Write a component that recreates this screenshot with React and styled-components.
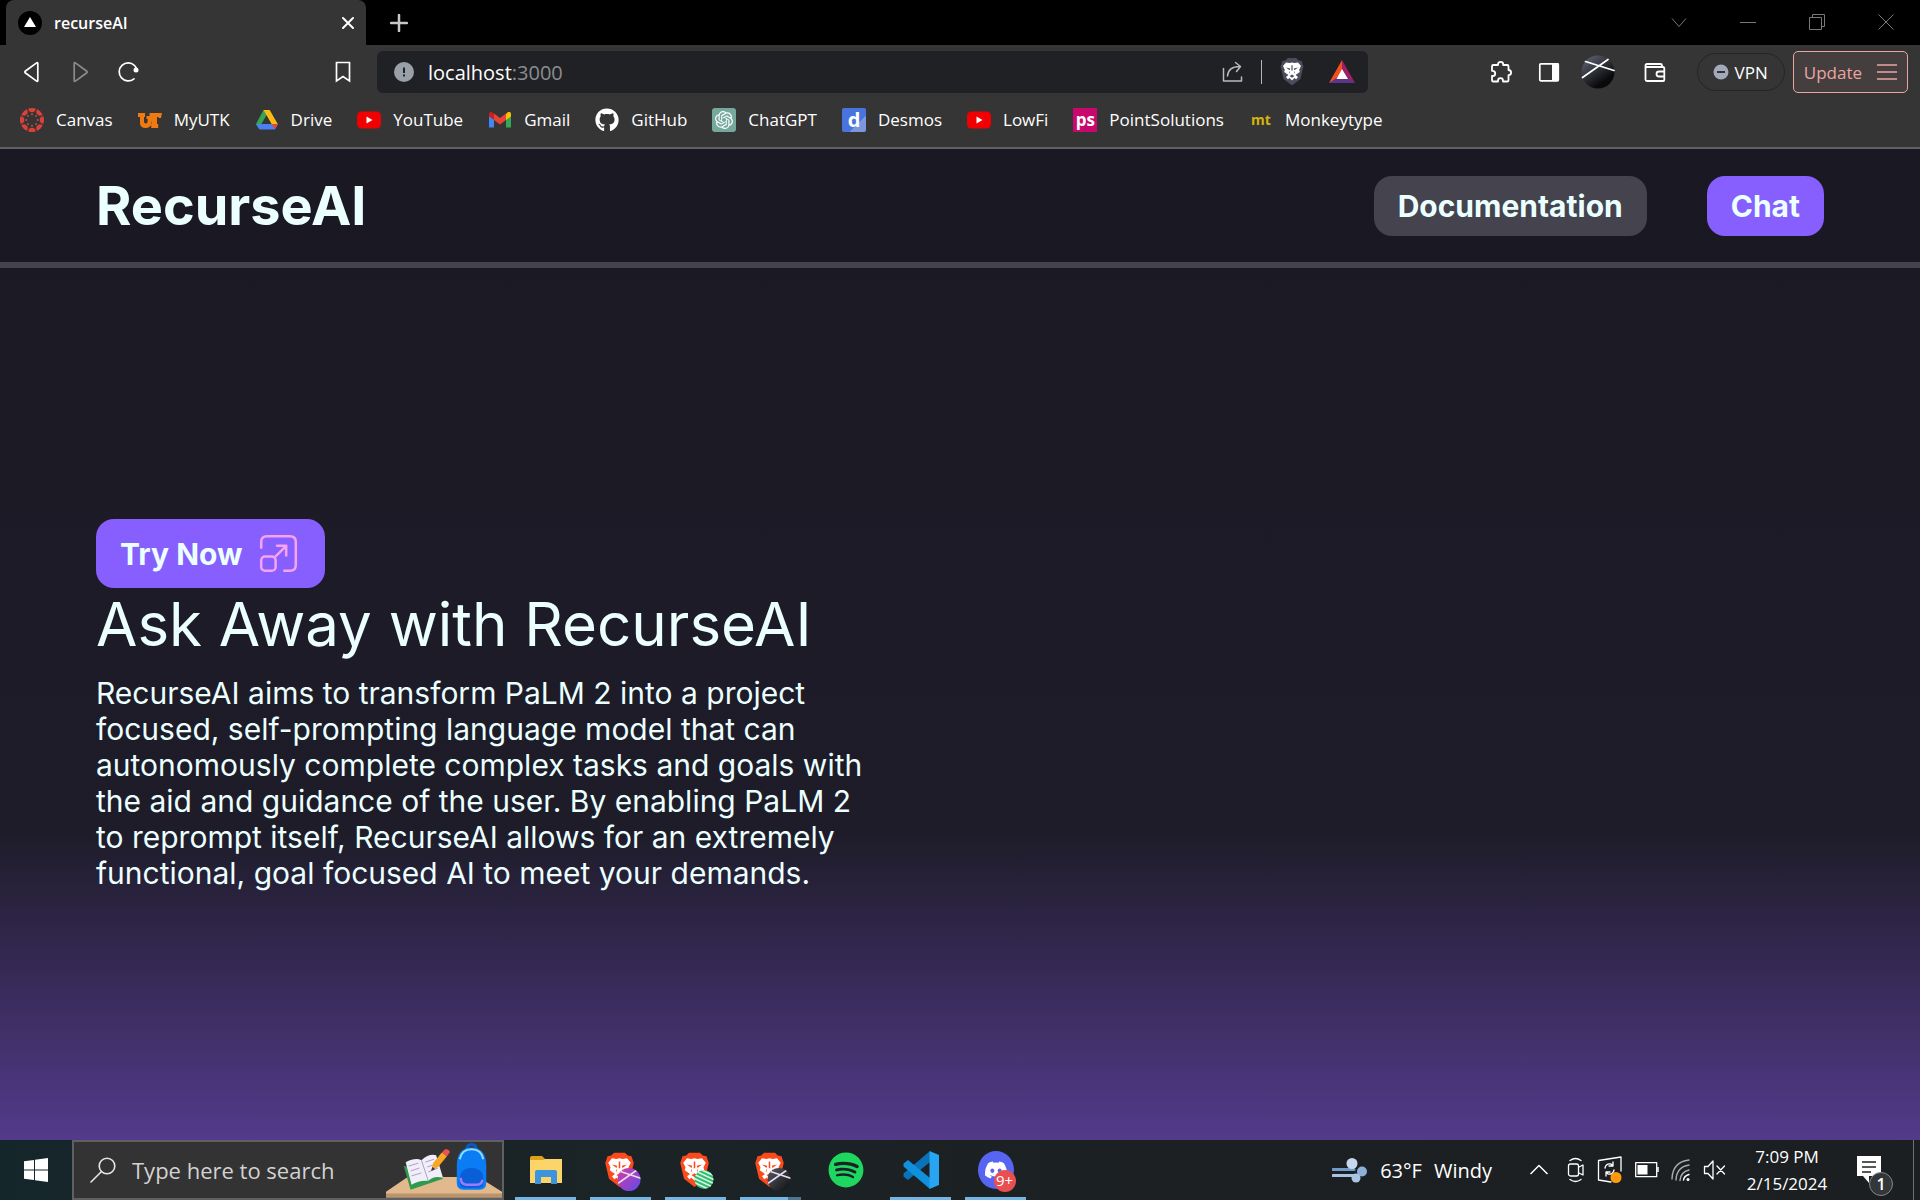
import React from "react";
import styled, { createGlobalStyle } from "styled-components";
import { SiOpenai } from "react-icons/si";
import { FaGithub, FaSpotify, FaDiscord } from "react-icons/fa";

const UI = '"Open Sans", "Noto Sans", sans-serif';
const MINT = "#ebffff";

const Global = createGlobalStyle`
  *, *::before, *::after { box-sizing: border-box; }
  body { margin: 0; background: #1b1a24; font-family: Inter, sans-serif; }
  button, input { font: inherit; color: inherit; border: 0; margin: 0; padding: 0; background: none; }
  a { color: inherit; text-decoration: none; }
  h1, h2, p, ul { margin: 0; padding: 0; }
  svg { display: block; flex: none; }
`;

const Screen = styled.div`
  min-height: 100vh;
  display: flex;
  flex-direction: column;
`;

/* ---------- browser chrome ---------- */

const Browser = styled.div`
  font-family: ${UI};
  color: #fff;
  background: #353535;
  border-bottom: 2px solid #5f6063;
`;

const TabStrip = styled.div`
  display: flex;
  align-items: stretch;
  height: 45px;
  padding-left: 6px;
  background: #000;
`;

const Tab = styled.div`
  width: 360px;
  display: flex;
  align-items: center;
  gap: 12px;
  padding: 0 11px 0 12px;
  border-radius: 8px 8px 0 0;
  background: #353535;
  font-size: 16px;
  font-weight: 600;
`;

const TabTitle = styled.span`
  flex: 1;
`;

const IconButton = styled.button`
  display: flex;
  align-items: center;
  justify-content: center;
  width: ${(p) => p.$w || 24}px;
  height: ${(p) => p.$h || 24}px;
`;

const WindowControls = styled.div`
  display: flex;
  margin-left: auto;
`;

const Toolbar = styled.div`
  display: grid;
  grid-template-columns: 365px 1fr 540px;
  gap: 12px;
  align-items: center;
  height: 54px;
`;

const NavGroup = styled.div`
  display: flex;
  align-items: center;
  gap: 24px;
  padding: 0 10px 0 20px;

  & > :last-child { margin-left: auto; }
`;

const AddressBar = styled.div`
  display: flex;
  align-items: center;
  height: 42px;
  padding: 0 6px 0 17px;
  border-radius: 6px;
  background: #202124;
  font-size: 20px;
`;

const AddressInput = styled.input`
  field-sizing: content;
  margin-left: 14px;
  outline: none;
`;

const Port = styled.span`
  flex: 1;
  color: #8b8d91;
`;

const AddressActions = styled.div`
  display: flex;
  align-items: center;
  gap: 16px;
`;

const Divider = styled.span`
  width: 1px;
  height: 24px;
  background: #b5b6b8;
`;

const Extensions = styled.div`
  display: flex;
  align-items: center;
  justify-content: flex-end;
  gap: 8px;
  padding-right: 12px;
`;

const ExtensionIcons = styled.div`
  display: flex;
  align-items: center;
  gap: 16px;
  margin-right: 10px;
`;

const Vpn = styled.button`
  display: flex;
  align-items: center;
  gap: 6px;
  height: 38px;
  padding: 0 16px 0 15px;
  border: 1px solid #252525;
  border-radius: 19px;
  font-size: 17px;
`;

const Update = styled.button`
  display: flex;
  align-items: center;
  gap: 15px;
  height: 42px;
  padding: 0 10px;
  border: 1px solid #eaa5a3;
  border-radius: 5px;
  background: #453e3e;
  color: #eaa5a3;
  font-size: 17px;
`;

const Bookmarks = styled.ul`
  display: flex;
  align-items: center;
  gap: 25px;
  height: 48px;
  padding: 0 20px 6px;
  list-style: none;
`;

const Bookmark = styled.a`
  display: flex;
  align-items: center;
  gap: 12px;
  font-size: 17px;
  line-height: 24px;
`;

const Favicon = styled.span`
  display: flex;
  align-items: center;
  justify-content: center;
  width: 24px;
  height: 24px;
  border-radius: ${(p) => p.$radius || 0}px;
  background: ${(p) => p.$bg || "none"};
  color: ${(p) => p.$color || "#fff"};
  font-size: ${(p) => p.$size || 17}px;
  font-weight: 700;
  line-height: 20px;
`;

/* ---------- site ---------- */

const Site = styled.div`
  flex: 1;
  display: flex;
  flex-direction: column;
  color: ${MINT};
  background: linear-gradient(180deg, #1a1923 0%, #1e1c29 69%, #533a8b 100%);
`;

const SiteHeader = styled.header`
  display: flex;
  align-items: center;
  justify-content: space-between;
  height: 119px;
  padding: 0 96px;
  background: #1a1923;
  border-bottom: 6px solid #44434e;
`;

const Brand = styled.h1`
  font-size: 54px;
  line-height: 60px;
  font-weight: 700;
`;

const SiteNav = styled.nav`
  display: flex;
  gap: 60px;
`;

const PillLink = styled.a`
  display: inline-flex;
  align-items: center;
  gap: 13px;
  padding: 12px 24px;
  border-radius: 18px;
  background: ${(p) => (p.$muted ? "#44434e" : "#875fff")};
  font-size: 30px;
  line-height: 36px;
  font-weight: 700;
`;

const Hero = styled.main`
  flex: 1;
  display: flex;
  flex-direction: column;
  justify-content: center;
  align-items: flex-start;
  padding: 2px 96px 0;
`;

const HeroTitle = styled.h2`
  margin: 6px 0 21px;
  font-size: 60px;
  line-height: 60px;
  font-weight: 400;
`;

const HeroText = styled.p`
  max-width: 45%;
  font-size: 30px;
  line-height: 36px;
`;

/* ---------- taskbar ---------- */

const Taskbar = styled.footer`
  display: flex;
  height: 60px;
  color: #fff;
  background: linear-gradient(90deg, #15262a 0%, #1b2326 35%, #1c2022 60%, #1b1f21 100%);
  font-family: ${UI};
`;

const Search = styled.label`
  display: flex;
  align-items: center;
  width: 432px;
  padding-left: 16px;
  border: 2px solid #5e6063;
  background: #333;
`;

const SearchInput = styled.input`
  flex: 1;
  min-width: 0;
  margin-left: 16px;
  font-size: 22px;
  outline: none;

  &::placeholder { color: #d2d2d2; opacity: 1; }
`;

const Apps = styled.div`
  display: flex;
  gap: 14px;
  padding-left: 11px;
`;

const underline = {
  none: "none",
  single: "linear-gradient(#76b4e3, #76b4e3)",
  stacked: "linear-gradient(90deg, #76b4e3 48px, #4f7590 48px)",
};

const AppButton = styled.button`
  display: flex;
  align-items: center;
  justify-content: center;
  width: 61px;
  height: 60px;
  padding-bottom: 1px;
  background: ${(p) => underline[p.$windows || "none"]} bottom / 100% 3px no-repeat;
`;

const Tray = styled.div`
  display: flex;
  align-items: center;
  margin-left: auto;
`;

const Weather = styled.button`
  display: flex;
  align-items: center;
  gap: 12px;
  margin-right: 37px;
  font-size: 20px;
`;

const TrayIcons = styled.div`
  display: flex;
  align-items: center;
  gap: 12px;

  & > :first-child { margin-right: 6px; }
`;

const Clock = styled.div`
  display: flex;
  flex-direction: column;
  align-items: center;
  width: 84px;
  margin: 0 28px 0 18px;
  font-size: 17px;
  line-height: 27px;
`;

const ShowDesktop = styled.button`
  width: 7px;
  height: 60px;
  margin-left: 20px;
  border-left: 1px solid #6f7274;
`;

const DiscordBadge = styled.span`
  position: absolute;
  right: -2px;
  bottom: -3px;
  width: 22px;
  height: 22px;
  border-radius: 50%;
  background: #e8504f;
  color: #fff;
  font-size: 15px;
  line-height: 21px;
  text-align: center;
`;

const DiscordDisc = styled.span`
  position: relative;
  display: flex;
  align-items: center;
  justify-content: center;
  width: 36px;
  height: 38px;
  border-radius: 50%;
  background: #5865f2;
`;

const NoticeButton = styled.button`
  position: relative;
  width: 36px;
  height: 44px;
  margin-top: 16px;
`;

const NoticeCount = styled.span`
  position: absolute;
  left: 12px;
  top: 16px;
  width: 24px;
  font-size: 16px;
  font-weight: 600;
  line-height: 24px;
  text-align: center;
`;

/* ---------- drawings ---------- */

const line = (color, width = 2) => ({
  fill: "none",
  stroke: color,
  strokeWidth: width,
  strokeLinecap: "round",
  strokeLinejoin: "round",
});

const NextIcon = () => (
  <svg width="24" height="24" viewBox="0 0 24 24">
    <circle cx="12" cy="12" r="12" />
    <path d="M12 6l6 10H6z" fill="#fff" />
  </svg>
);

const CanvasIcon = () => {
  const turns = [0, 45, 90, 135, 180, 225, 270, 315];
  return (
    <svg width="24" height="24" viewBox="0 0 24 24" fill="#d8423a">
      {turns.map((t) => (
        <g key={t} transform={`rotate(${t} 12 12)`}>
          <path d="M8.300 .6a12 12 0 0 1 7.400 0a3.700 3.700 0 0 1-7.400 0z" />
          <circle cx="12" cy="6.200" r="1" />
        </g>
      ))}
    </svg>
  );
};

const TennesseeIcon = () => (
  <svg width="24" height="15" viewBox="0 0 24 15" fill="#ee7a10">
    <path d="M0 0h7v4H6v4.500q0 2 1.800 2t1.800-2V6H8.500V3h3V0H24l-1 5h-2.500V4H19v7h1.200v4h-7v-4h.8V7q0 8-6.200 8T2 9V4H0z" />
  </svg>
);

const DriveIcon = () => (
  <svg width="24" height="24" viewBox="0 0 24 24">
    <path d="M8.500 2h6l-7.500 13-3.500 5.500L1 16z" fill="#35a454" />
    <path d="M8.500 2h6.200l8 14h-6.200z" fill="#fbbc12" />
    <path d="M5 16h18l-3 5.500H4.500L1 16z" fill="#4a80f0" />
    <path d="M16.500 16h6.300l-3 5z" fill="#e94335" />
    <path d="M12 8.500l4.300 7.500H7.700z" fill="#353535" />
  </svg>
);

const YouTubeIcon = () => (
  <svg width="24" height="18" viewBox="0 0 24 18">
    <rect width="24" height="17" y=".5" rx="4.500" fill="#f00000" />
    <path d="M9.500 5.500v7l6-3.500z" fill="#fff" />
  </svg>
);

const GmailIcon = () => (
  <svg width="24" height="18" viewBox="0 0 24 18">
    <path d="M1 4v12.500h5V8z" fill="#4285f4" />
    <path d="M23 4v12.500h-5V8z" fill="#34a853" />
    <path d="M18 3v6l5-3.500V3c0-2-2-2.500-3.500-1.500z" fill="#fbbc04" />
    <path d="M6 3v6L1 5.500V3c0-2 2-2.500 3.500-1.500z" fill="#c5221f" />
    <path d="M6 2.500l6 4.500 6-4.500v6.500l-6 4.500-6-4.500z" fill="#ea4335" />
  </svg>
);

const BackIcon = ({ color, flip }) => (
  <svg width="24" height="24" viewBox="0 0 24 24">
    <path
      d="M17.800 3.500v17q0 1.200-1.200.6L5.500 13q-1.300-1 0-2L16.600 2.900q1.200-.6 1.200.6z"
      transform={flip ? "matrix(-1 0 0 1 24 0)" : undefined}
      {...line(color, 1.7)}
    />
  </svg>
);

const ReloadIcon = () => (
  <svg width="24" height="24" viewBox="0 0 24 24">
    <path d="M18 18.800A9 9 0 1 1 18.500 5.500q1.500 1.500 2 3.500" {...line("#fff", 1.7)} />
    <circle cx="20" cy="10" r="2.500" fill="#fff" />
  </svg>
);

const SaveIcon = () => (
  <svg width="24" height="24" viewBox="0 0 24 24">
    <path d="M5.500 2.500h13v18.500L12 16.500 5.500 21z" {...line("#fff", 1.7)} strokeLinejoin="miter" />
  </svg>
);

const InfoIcon = () => (
  <svg width="20" height="20" viewBox="0 0 20 20">
    <circle cx="10" cy="10" r="10" fill="#9aa0a8" />
    <path d="M9 5.500h2v5.500H9zM9 12.500h2v2H9z" fill="#202124" />
  </svg>
);

const ShareIcon = () => (
  <svg width="24" height="24" viewBox="0 0 24 24">
    <path d="M2.500 8.500v12.500h18v-4M6.500 16c.5-6 5-9.500 12-9.500M14.500 2.500l5 4-4 5" {...line("#b9babd", 1.5)} />
  </svg>
);

const BatIcon = () => (
  <svg width="28" height="28" viewBox="0 0 28 28">
    <path d="M14 2v10L8.500 21 1 25z" fill="#f4501f" />
    <path d="M14 2l13 23-7.500-4L14 12z" fill="#9e2064" />
    <path d="M1 25l7.500-5h11l7.500 5z" fill="#5f358c" />
    <path d="M14 11l6 10H8.500z" fill="#fff" />
  </svg>
);

const BraveLion = ({ size, shield, face }) => (
  <svg width={size} height={size * 1.15} viewBox="0 0 40 46">
    <path d="M9 4l4-4h14l4 4 5 1 3 9-5 21-14 11L6 35 1 14l3-9z" fill={shield} />
    <path
      d="M10 7.500l6 1 4-1 4 1 6-1 5 6-3 6 1 4-7 5 4 3-3 4-3-2-4 4-4-4-3 2-3-4 4-3-7-5 1-4-3-6z"
      fill={face}
    />
    <path
      d="M10 16l7 1.500-1 3zM30 16l-7 1.500 1 3zM17 21l-2 4 5 3 5-3-2-4 1 5-4 1.500-4-1.500zM16 30l4-2 4 2-4 3zM19 12h2v9h-2z"
      fill={shield}
    />
  </svg>
);

const PuzzleIcon = () => (
  <svg width="24" height="24" viewBox="0 0 24 24">
    <path
      d="M3 6.300q0-1.300 1.300-1.300H9V4.500a2.600 2.600 0 0 1 5.200 0V5h4q1.300 0 1.300 1.300V10a2.600 2.600 0 0 1 0 5.200v5q0 1.300-1.300 1.300h-4.200v-.8a2.500 2.500 0 0 0-5 0v.8H4.300Q3 21.500 3 20.200V16h.6a2.600 2.600 0 0 0 0-5.200H3z"
      {...line("#fff", 1.8)}
    />
  </svg>
);

const PanelIcon = () => (
  <svg width="24" height="24" viewBox="0 0 24 24">
    <rect x="2.800" y="3.800" width="18.500" height="17" rx="1" {...line("#fff", 1.7)} />
    <path d="M15 3h6.500v18H15z" fill="#fff" />
  </svg>
);

const AvatarIcon = () => (
  <svg width="34" height="34" viewBox="0 0 34 34">
    <defs>
      <linearGradient id="avatar" x1="0" y1="0" x2=".7" y2="1">
        <stop offset=".1" stopColor="#5c6070" />
        <stop offset=".85" stopColor="#0a0a0c" />
      </linearGradient>
    </defs>
    <circle cx="17" cy="17" r="16.500" fill="url(#avatar)" />
    <path d="M4.500 6.500L33 15.500M1.500 22.500L27 4.500" {...line("#fff", 1.7)} />
  </svg>
);

const WalletIcon = () => (
  <svg width="24" height="24" viewBox="0 0 24 24">
    <path
      d="M2.500 7.200V5.500Q2.500 4 4 4h13.500q1.500 0 1.500 1.500V7M2.500 7v12.500q0 1.500 1.500 1.500h16q1.300 0 1.300-1.300V8.500Q21.300 7 20 7zM21.300 11.500H16q-2.500 0-2.500 2.500t2.500 2.500h5.300"
      {...line("#fff", 1.8)}
    />
  </svg>
);

const VpnIcon = () => (
  <svg width="16" height="16" viewBox="0 0 16 16">
    <circle cx="8" cy="8" r="7.500" fill="#a3a8bb" />
    <path d="M4 8h8" stroke="#353535" strokeWidth="2" />
  </svg>
);

const MenuIcon = () => (
  <svg width="20" height="18" viewBox="0 0 20 18">
    <path d="M0 2h20M0 9h20M0 16h20" stroke="#eaa5a3" strokeWidth="1.500" />
  </svg>
);

const ResizeIcon = () => (
  <svg width="45" height="45" viewBox="-3.400 -3.400 46.800 46.800">
    <path d="M2 14V8q0-6 6-6h24q6 0 6 6v24q0 6-6 6h-6" {...line("#f7a3f0", 2.6)} />
    <rect x="2" y="23" width="15" height="15" rx="4" {...line("#f7a3f0", 2.6)} />
    <path d="M17 23l10.500-10.500M18.500 12h9.500v10" {...line("#f7a3f0", 2.6)} />
  </svg>
);

const StartIcon = () => (
  <svg width="24" height="24" viewBox="0 0 24 24" fill="#fff">
    <path d="M0 3.300L10 2v9.500H0zM11 1.800L24 0v11.500H11zM0 12.500h10V22L0 20.700zM11 12.500h13V24l-13-1.800z" />
  </svg>
);

const SearchIcon = () => (
  <svg width="26" height="26" viewBox="0 0 26 26">
    <circle cx="17" cy="9" r="7.800" {...line("#e6e6e6", 1.6)} />
    <path d="M11.500 14.500L1 25" {...line("#e6e6e6", 1.6)} />
  </svg>
);

const SearchArt = () => (
  <svg width="116" height="56" viewBox="0 0 118 56">
    <path d="M0 50l22-15h72l24 15v6H0z" fill="#e2b98c" />
    <path d="M0 52h118v4H0z" fill="#b9946c" />
    <path d="M18 24l7 24 33-11-3-7z" fill="#2f9a4b" />
    <path d="M20 20q10-5 16-2 8-7 15-5l7 23q-9-3-15 3-9-1-17 4z" fill="#f1eefa" />
    <path d="M36 18l7 21M23 24l10-3M25 29l9-3M26 34l10-3M40 20l9-3M42 25l8-3M43 30l10-4" fill="none" stroke="#a99fc8" />
    <path d="M46 29l2-8 9-11 5 4-9 11z" fill="#f8a825" />
    <path d="M57 10l3-3q4-1 5 3l-3 4z" fill="#ee5350" />
    <path d="M46 29l1-4 3 2z" fill="#3d3350" />
    <path d="M82 8q0-6 5-6t5 6" fill="none" stroke="#0b57c4" strokeWidth="3" />
    <path d="M72 24Q72 5 87 5t15 19v17q0 7-7 7H79q-7 0-7-7z" fill="#0a7df5" />
    <path d="M75 17Q77 7 87 7t12 10" fill="none" stroke="#8fdcff" strokeWidth="2" />
    <path d="M75 38q0-12 12-12t12 12v3q0 5-5 5H80q-5 0-5-5z" fill="#0a5ed8" />
    <path d="M76 36q0 7 6 7h10q6 0 6-5" fill="none" stroke="#9d7bff" strokeWidth="2.500" />
  </svg>
);

const ExplorerIcon = () => (
  <svg width="34" height="30" viewBox="0 0 34 30">
    <path d="M1 3q0-2 2-2h10l3 3v5H1z" fill="#dfa11c" />
    <path d="M1 5h13l2-1h17v24H1z" fill="#fbd569" />
    <path d="M6 29V17q0-2 2-2h18q2 0 2 2v12h-6v-7H12v7z" fill="#3d94dc" />
  </svg>
);

const profiles = {
  violet: { from: "#e0389a", to: "#5a4df0", r: 11.5 },
  green: { from: "#35c077", to: "#2fb56c", r: 9.5 },
  dark: { from: "#5a5f66", to: "#0c0c0e", r: 11.5 },
};

const BraveProfileIcon = ({ kind }) => (
  <svg width="42" height="44" viewBox="0 0 42 44">
    <defs>
      <linearGradient id={"p-" + kind} x1="0" y1="0" x2="1" y2="1">
        <stop offset="0" stopColor={profiles[kind].from} />
        <stop offset="1" stopColor={profiles[kind].to} />
      </linearGradient>
      <clipPath id={"c-" + kind}>
        <circle cx="29" cy="31.500" r={profiles[kind].r} />
      </clipPath>
    </defs>
    <g transform="translate(4.500 4.500)">
      <BraveLion size={30} shield="#fb4a1c" face="#fff" />
    </g>
    <g clipPath={`url(#c-${kind})`}>
      <rect x="16" y="19" width="25" height="25" fill={`url(#p-${kind})`} />
      {kind === "green" ? (
        <path d="M16 21l26 12M16 25l26 12M16 29l26 12M16 33l26 12M18 18l26 12" stroke="#d9f7e5" strokeWidth="1.600" />
      ) : (
        <path d="M19 23l24 8M17 36l20-14" stroke="#e9d9ee" strokeWidth="1.600" />
      )}
    </g>
  </svg>
);

const CodeIcon = () => (
  <svg width="36" height="38" viewBox="0 0 36 38">
    <path d="M27 0v11L5 29l-4.500-3.500v-3z" fill="#0a72b8" />
    <path d="M27 38V27L5 9 .5 12.500v3z" fill="#1191dc" />
    <path d="M26.500 0L36 4v30l-9.500 4z" fill="#27a5f2" />
  </svg>
);

const WindIcon = () => (
  <svg width="36" height="26" viewBox="0 0 36 26">
    <path d="M1 12.500h21" {...line("#6f9bc9", 3)} />
    <path d="M1 18.500h25" {...line("#a8c4e2", 3)} />
    <circle cx="20" cy="6.500" r="5.500" fill="#c4d8ee" />
    <circle cx="30" cy="14.500" r="5" fill="#8fb0d6" />
    <circle cx="24" cy="21" r="4.500" fill="#a9c5e4" />
  </svg>
);

const ChevronUp = () => (
  <svg width="20" height="24" viewBox="0 0 20 24">
    <path d="M1.500 16L10 7.500l8.500 8.500" {...line("#fff", 1.5)} strokeLinecap="butt" />
  </svg>
);

const MeetIcon = () => (
  <svg width="18" height="28" viewBox="0 0 18 28">
    <path d="M3 4.500q5.500-4 11 0M3 23.500q5.500 4 11 0M12 11l4-2v10l-4-2" {...line("#fff", 1.3)} />
    <rect x="1.500" y="8" width="10" height="12" rx="2" {...line("#fff", 1.3)} />
  </svg>
);

const SyncIcon = () => (
  <svg width="26" height="28" viewBox="0 0 26 28">
    <path d="M14 26L1.500 24V4.500L24 1v14" {...line("#fff", 1.3)} />
    <path d="M8 12q1-5 6-4l2 2M16 6v4h-4M17 14q-1 5-6 4l-2-2M9 20v-4h4" {...line("#fff", 1.3)} />
    <circle cx="19" cy="21.500" r="5.500" fill="#ff9a0a" />
  </svg>
);

const BatteryIcon = () => (
  <svg width="24" height="18" viewBox="0 0 24 18">
    <rect x=".7" y="1.700" width="21" height="14" {...line("#fff", 1.3)} />
    <path d="M2.500 4h10v9.500h-10z" fill="#fff" />
    <path d="M23 6v5" stroke="#fff" strokeWidth="1.500" />
  </svg>
);

const WifiIcon = () => (
  <svg width="20" height="24" viewBox="0 0 20 24">
    <path d="M1 21Q1.500 4 18 2M5 22Q5.500 9 18 7M9 22.500Q9.500 14 18 12" {...line("#a9adae", 1.4)} />
    <path d="M12.500 22q.5-4 5.500-5.500" {...line("#fff", 1.4)} />
    <circle cx="17" cy="21.500" r="1.500" fill="#fff" />
  </svg>
);

const MuteIcon = () => (
  <svg width="24" height="24" viewBox="0 0 24 24">
    <path d="M1.500 8.500h3.500l5-5.500v18l-5-5.500H1.500zM14 8l7.500 8M21.500 8L14 16" {...line("#fff", 1.3)} />
  </svg>
);

const NoticeIcon = () => (
  <svg width="36" height="44" viewBox="0 0 36 44">
    <path d="M0 0h24v20H12v7l-6-7H0z" fill="#fff" />
    <path d="M5 6h14M5 11h14M5 16h9" stroke="#1c2022" strokeWidth="1.500" />
    <circle cx="24" cy="28" r="11.500" fill="#33373a" stroke="#85888a" />
  </svg>
);

const WindowGlyph = ({ d }) => (
  <svg width="16" height="16" viewBox="0 0 16 16">
    <path d={d} fill="none" stroke="#77797b" />
  </svg>
);

const bookmarks = [
  { name: "Canvas", icon: <CanvasIcon /> },
  { name: "MyUTK", icon: <TennesseeIcon /> },
  { name: "Drive", icon: <DriveIcon /> },
  { name: "YouTube", icon: <YouTubeIcon /> },
  { name: "Gmail", icon: <GmailIcon /> },
  { name: "GitHub", icon: <FaGithub size={24} /> },
  { name: "ChatGPT", icon: <SiOpenai size={18} />, bg: "#75a99b", radius: 3 },
  { name: "Desmos", icon: "d", bg: "linear-gradient(135deg, #4a74dd 65%, #7b98dd 65%)", radius: 2, size: 20 },
  { name: "LowFi", icon: <YouTubeIcon /> },
  { name: "PointSolutions", icon: "ps", bg: "#c9086d" },
  { name: "Monkeytype", icon: "mt", color: "#d3b40c", size: 14 },
];

export default function App() {
  return (
    <Screen>
      <Global />
      <Browser>
        <TabStrip>
          <Tab>
            <NextIcon />
            <TabTitle>recurseAI</TabTitle>
            <IconButton $w={14} aria-label="Close tab">
              <svg width="12" height="12" viewBox="0 0 12 12">
                <path d="M1 1l10 10M11 1L1 11" {...line("#fff", 2)} />
              </svg>
            </IconButton>
          </Tab>
          <IconButton $w={66} $h={45} aria-label="New tab">
            <svg width="18" height="18" viewBox="0 0 18 18">
              <path d="M9 1v16M1 9h16" {...line("#c8c8c8", 2.5)} />
            </svg>
          </IconButton>
          <WindowControls>
            <IconButton $w={69} $h={43} aria-label="Search tabs"><WindowGlyph d="M1 4.500l7 8 7-8" /></IconButton>
            <IconButton $w={69} $h={43} aria-label="Minimize"><WindowGlyph d="M0 8.500h16" /></IconButton>
            <IconButton $w={69} $h={43} aria-label="Restore"><WindowGlyph d="M.5 3.500h12v12H.5zM3.500 3.500v-3h12v12h-3" /></IconButton>
            <IconButton $w={69} $h={43} aria-label="Close"><WindowGlyph d="M.5 .5l15 15M15.500 .5l-15 15" /></IconButton>
          </WindowControls>
        </TabStrip>

        <Toolbar>
          <NavGroup>
            <IconButton aria-label="Back"><BackIcon color="#fff" /></IconButton>
            <IconButton aria-label="Forward"><BackIcon color="#8b8b8b" flip /></IconButton>
            <IconButton aria-label="Reload"><ReloadIcon /></IconButton>
            <IconButton aria-label="Bookmark this page"><SaveIcon /></IconButton>
          </NavGroup>
          <AddressBar>
            <InfoIcon />
            <AddressInput aria-label="Address" defaultValue="localhost" />
            <Port>:3000</Port>
            <AddressActions>
              <IconButton aria-label="Share"><ShareIcon /></IconButton>
              <Divider />
              <IconButton $w={28} $h={28} aria-label="Brave Shields">
                <BraveLion size={24} shield="#4b4c5c" face="#fff" />
              </IconButton>
              <IconButton $w={40} $h={28} aria-label="Brave Rewards"><BatIcon /></IconButton>
            </AddressActions>
          </AddressBar>
          <Extensions>
            <ExtensionIcons>
              <IconButton $w={32} aria-label="Extensions"><PuzzleIcon /></IconButton>
              <IconButton $w={32} aria-label="Side panel"><PanelIcon /></IconButton>
              <IconButton $w={34} $h={34} aria-label="Profile"><AvatarIcon /></IconButton>
              <IconButton $w={48} aria-label="Wallet"><WalletIcon /></IconButton>
            </ExtensionIcons>
            <Vpn><VpnIcon />VPN</Vpn>
            <Update>Update<MenuIcon /></Update>
          </Extensions>
        </Toolbar>

        <Bookmarks>
          {bookmarks.map((b) => (
            <li key={b.name}>
              <Bookmark href="#">
                <Favicon $bg={b.bg} $radius={b.radius} $color={b.color} $size={b.size}>{b.icon}</Favicon>
                {b.name}
              </Bookmark>
            </li>
          ))}
        </Bookmarks>
      </Browser>

      <Site>
        <SiteHeader>
          <Brand>RecurseAI</Brand>
          <SiteNav>
            <PillLink href="#" $muted>Documentation</PillLink>
            <PillLink href="#">Chat</PillLink>
          </SiteNav>
        </SiteHeader>
        <Hero>
          <PillLink href="#">Try Now<ResizeIcon /></PillLink>
          <HeroTitle>Ask Away with RecurseAI</HeroTitle>
          <HeroText>
            RecurseAI aims to transform PaLM 2 into a project focused, self-prompting language model that can
            autonomously complete complex tasks and goals with the aid and guidance of the user. By enabling PaLM 2
            to reprompt itself, RecurseAI allows for an extremely functional, goal focused AI to meet your demands.
          </HeroText>
        </Hero>
      </Site>

      <Taskbar>
        <IconButton $w={72} $h={60} aria-label="Start"><StartIcon /></IconButton>
        <Search>
          <SearchIcon />
          <SearchInput aria-label="Search" placeholder="Type here to search" />
          <SearchArt />
        </Search>
        <Apps>
          <AppButton $windows="single" aria-label="File Explorer"><ExplorerIcon /></AppButton>
          <AppButton $windows="single" aria-label="Brave, violet profile"><BraveProfileIcon kind="violet" /></AppButton>
          <AppButton $windows="single" aria-label="Brave, green profile"><BraveProfileIcon kind="green" /></AppButton>
          <AppButton $windows="stacked" aria-label="Brave, dark profile"><BraveProfileIcon kind="dark" /></AppButton>
          <AppButton aria-label="Spotify"><FaSpotify size={36} color="#1ed760" /></AppButton>
          <AppButton $windows="single" aria-label="Visual Studio Code"><CodeIcon /></AppButton>
          <AppButton $windows="single" aria-label="Discord">
            <DiscordDisc><FaDiscord size={24} /><DiscordBadge>9+</DiscordBadge></DiscordDisc>
          </AppButton>
        </Apps>
        <Tray>
          <Weather><WindIcon /><span>63°F</span><span>Windy</span></Weather>
          <TrayIcons>
            <ChevronUp /><MeetIcon /><SyncIcon /><BatteryIcon /><WifiIcon /><MuteIcon />
          </TrayIcons>
          <Clock><span>7:09 PM</span><span>2/15/2024</span></Clock>
          <NoticeButton aria-label="Notifications"><NoticeIcon /><NoticeCount>1</NoticeCount></NoticeButton>
          <ShowDesktop aria-label="Show desktop" />
        </Tray>
      </Taskbar>
    </Screen>
  );
}
